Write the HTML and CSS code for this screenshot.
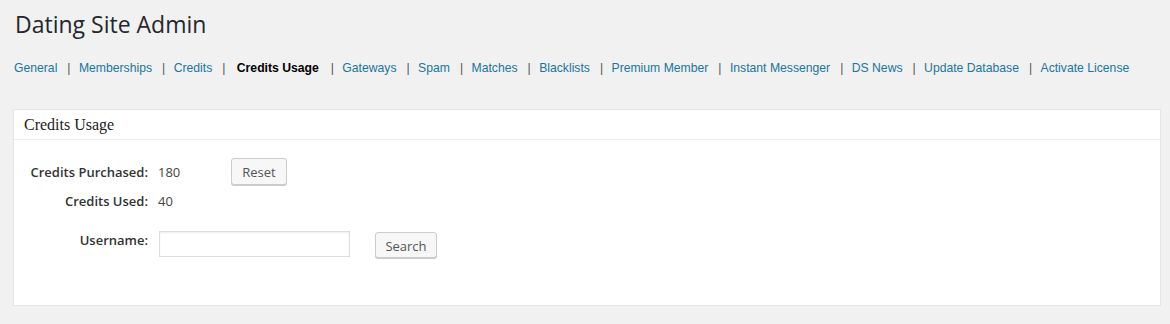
FILE: index.html
```html
<!DOCTYPE html>
<html>
<head>
<meta charset="utf-8">
<title>Dating Site Admin</title>
<link rel="stylesheet" href="styles.css">
</head>
<body>
<div class="wrap">
  <h1 class="title">Dating Site Admin</h1>
  <ul class="subnav">
    <li><a href="#">General</a><span class="sep">|</span></li>
    <li><a href="#">Memberships</a><span class="sep">|</span></li>
    <li><a href="#">Credits</a><span class="sep">|</span></li>
    <li><a href="#" class="current">Credits Usage</a><span class="sep">|</span></li>
    <li><a href="#">Gateways</a><span class="sep">|</span></li>
    <li><a href="#">Spam</a><span class="sep">|</span></li>
    <li><a href="#">Matches</a><span class="sep">|</span></li>
    <li><a href="#">Blacklists</a><span class="sep">|</span></li>
    <li><a href="#">Premium Member</a><span class="sep">|</span></li>
    <li><a href="#">Instant Messenger</a><span class="sep">|</span></li>
    <li><a href="#">DS News</a><span class="sep">|</span></li>
    <li><a href="#">Update Database</a><span class="sep">|</span></li>
    <li><a href="#">Activate License</a></li>
  </ul>
  <div class="postbox">
    <h3 class="hndle">Credits Usage</h3>
    <div class="inside">
      <div class="row row-purchased">
        <span class="label">Credits Purchased:</span>
        <span class="value">180</span>
        <button class="button">Reset</button>
      </div>
      <div class="row row-used">
        <span class="label">Credits Used:</span>
        <span class="value">40</span>
      </div>
      <div class="row row-user">
        <span class="label label-top">Username:</span>
        <input class="input" type="text">
        <button class="button button-search">Search</button>
      </div>
    </div>
  </div>
</div>
</body>
</html>
```

FILE: styles.css
```css
html, body {
  margin: 0;
  padding: 0;
  background: #f1f1f1;
}
body {
  font-family: "Open Sans", sans-serif;
  color: #444;
}
.wrap {
  padding: 0 9px 0 13px;
}
.title {
  margin: 0;
  padding: 9px 0 0 2px;
  font-family: "Open Sans", sans-serif;
  font-weight: 400;
  font-size: 23px;
  line-height: 30px;
  color: #23282d;
}
.subnav {
  list-style: none;
  margin: 0;
  padding: 21px 0 0 1px;
  white-space: nowrap;
  font-family: "Liberation Sans", Arial, sans-serif;
  font-size: 12.2px;
  line-height: 16px;
}
.subnav li {
  display: inline;
}
.subnav a {
  color: #21759b;
  text-decoration: none;
}
.subnav a.current {
  color: #000;
  font-weight: 700;
  margin: 0 2px 0 3px;
}
.sep {
  color: #555;
  margin: 0 5px 0 10px;
}
.postbox {
  margin-top: 33px;
  background: #fff;
  border: 1px solid #e5e5e5;
  box-shadow: 0 1px 1px rgba(0,0,0,0.04);
  width: 1146px;
}
.hndle {
  margin: 0;
  height: 29px;
  border-bottom: 1px solid #eee;
  padding: 0 0 0 10px;
  font-family: "Liberation Serif", "Times New Roman", serif;
  font-weight: 400;
  font-size: 16px;
  line-height: 30px;
  color: #222;
}
.inside {
  padding: 18px 0 47px 0;
}
.row {
  display: flex;
  align-items: center;
  font-size: 13px;
}
.label {
  width: 134px;
  text-align: right;
  font-weight: 600;
  color: #333;
  margin-right: 10px;
}
.value {
  width: 73px;
  color: #444;
}
.row-purchased {
  height: 27px;
}
.row-used {
  height: 20px;
  margin-top: 6px;
}
.row-user {
  margin-top: 20px;
  align-items: flex-start;
}
.label-top {
  line-height: 18px;
  margin-right: 11px;
}
.button {
  font-family: "Open Sans", sans-serif;
  font-size: 13px;
  color: #555;
  background: #f7f7f7;
  border: 1px solid #ccc;
  border-radius: 3px;
  box-shadow: 0 1px 0 #ccc;
  height: 27px;
  width: 56px;
  padding: 0;
  margin: 0;
  line-height: 27px;
}
.button-search {
  width: 62px;
  height: 26px;
  margin-top: 1px;
  margin-left: 25px;
}
.input {
  width: 191px;
  height: 26px;
  box-sizing: border-box;
  border: 1px solid #ddd;
  box-shadow: inset 0 1px 2px rgba(0,0,0,0.07);
  margin: 0;
  padding: 0 5px;
  background: #fff;
}
```
